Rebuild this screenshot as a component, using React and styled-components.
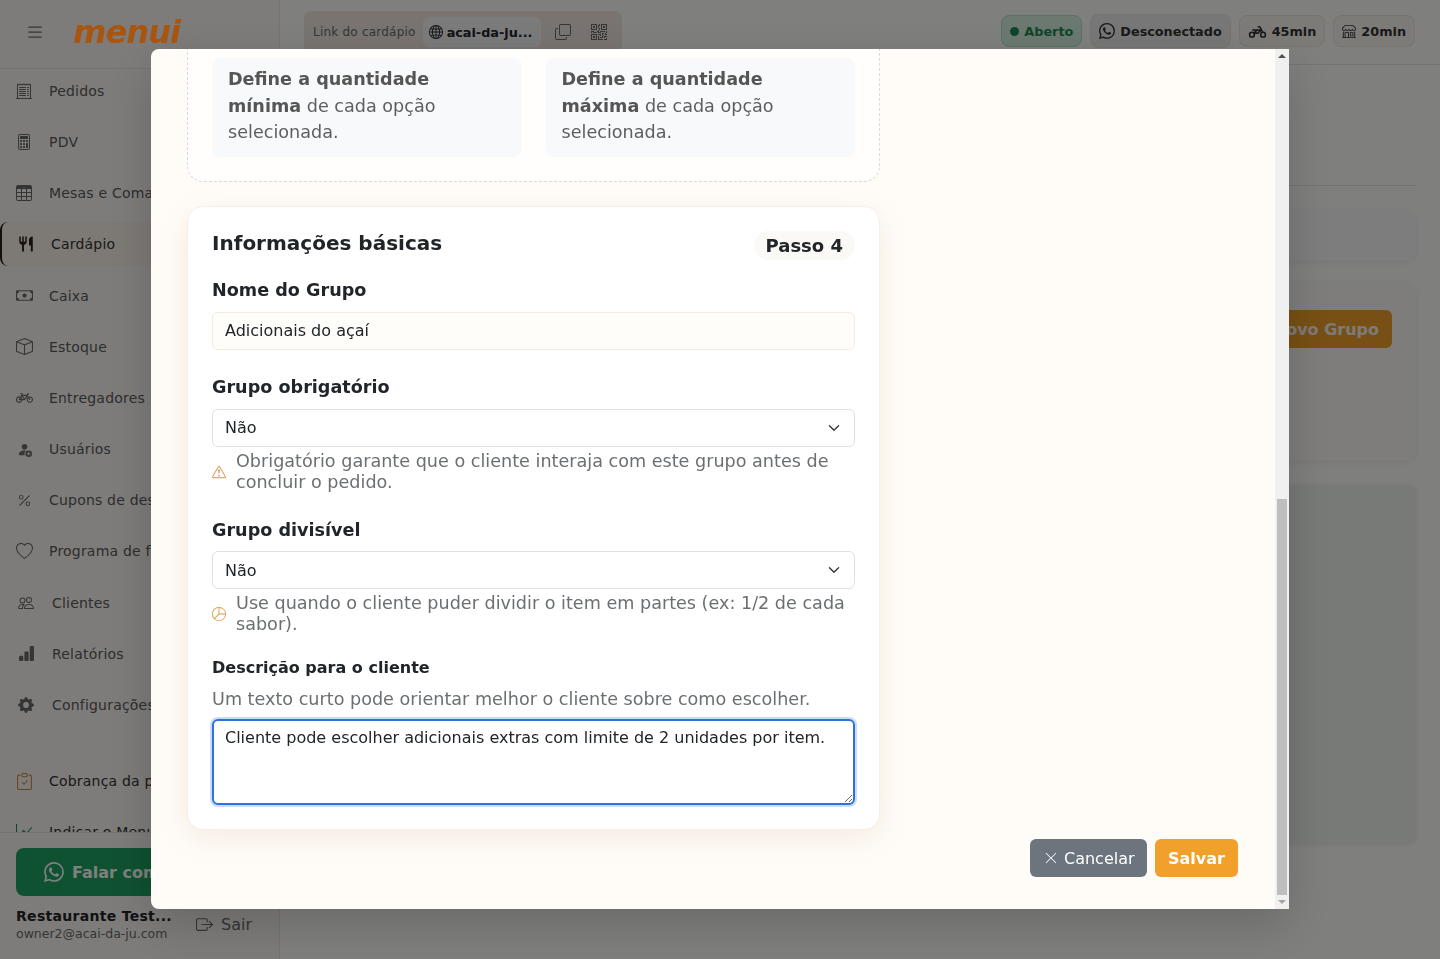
import styled, { createGlobalStyle } from 'styled-components';
import {
  BsBarChartFill,
  BsBicycle,
  BsBox,
  BsBoxArrowRight,
  BsCalculator,
  BsCash,
  BsChevronDown,
  BsCircleFill,
  BsClipboardCheck,
  BsCopy,
  BsExclamationTriangle,
  BsGearFill,
  BsGlobe,
  BsGraphUp,
  BsHeart,
  BsList,
  BsPeople,
  BsPercent,
  BsPersonFillAdd,
  BsPieChart,
  BsQrCode,
  BsReceiptCutoff,
  BsShop,
  BsTable,
  BsWhatsapp,
  BsXLg,
} from 'react-icons/bs';
import { MdRestaurant } from 'react-icons/md';
import { TbMotorbike } from 'react-icons/tb';

const NAV_TOP = [
  { label: 'Pedidos', Icon: BsReceiptCutoff, size: 16 },
  { label: 'PDV', Icon: BsCalculator, size: 16 },
  { label: 'Mesas e Comandas', Icon: BsTable, size: 16 },
  { label: 'Cardápio', Icon: MdRestaurant, active: true },
  { label: 'Caixa', Icon: BsCash, size: 17 },
  { label: 'Estoque', Icon: BsBox, size: 17 },
  { label: 'Entregadores', Icon: BsBicycle, size: 17 },
  { label: 'Usuários', Icon: BsPersonFillAdd, size: 15 },
  { label: 'Cupons de desconto', Icon: BsPercent, size: 15 },
  { label: 'Programa de fidelidade', Icon: BsHeart, size: 17 },
  { label: 'Clientes', Icon: BsPeople, size: 16, nudge: true },
  { label: 'Relatórios', Icon: BsBarChartFill, size: 17, nudge: true },
  { label: 'Configurações', Icon: BsGearFill, size: 16, nudge: true },
];

export default function App() {
  return (
    <>
      <GlobalStyle />
      <Shell>
        <Sidebar>
          <Brand>
            <BsList />
            <Logo>menui</Logo>
          </Brand>
          <Nav>
            {NAV_TOP.map(({ label, Icon, size, active, nudge }) => (
              <NavItem key={label} $active={active} $nudge={nudge} $size={size}>
                <IconSlot>
                  <Icon />
                </IconSlot>
                <span>{label}</span>
              </NavItem>
            ))}
            <NavDivider />
            <NavItem $strong $size={17}>
              <IconSlot>
                <BsClipboardCheck color="#c98a3c" />
              </IconSlot>
              <span>Cobrança da plataforma</span>
            </NavItem>
            <NavItem $strong $size={17}>
              <IconSlot>
                <BsGraphUp color="#1c8a57" />
              </IconSlot>
              <span>Indicar o Menui</span>
            </NavItem>
          </Nav>
          <SideFooter>
            <SupportButton>
              <BsWhatsapp />
              Falar com suporte
            </SupportButton>
            <UserRow>
              <UserInfo>
                <strong>Restaurante Test...</strong>
                <small>owner2@acai-da-ju.com</small>
              </UserInfo>
              <LogoutLink>
                <BsBoxArrowRight />
                Sair
              </LogoutLink>
            </UserRow>
          </SideFooter>
        </Sidebar>

        <Main>
          <TopBar>
            <LinkBox>
              <span>Link do cardápio</span>
              <LinkSlug>
                <BsGlobe />
                acai-da-ju...
              </LinkSlug>
              <LinkActions>
                <LinkAction>
                  <BsCopy />
                </LinkAction>
                <LinkAction>
                  <BsQrCode />
                </LinkAction>
              </LinkActions>
            </LinkBox>
            <Chips>
              <Chip $tone="open" $icon={9}>
                <BsCircleFill />
                Aberto
              </Chip>
              <Chip $tone="plain" $icon={16}>
                <BsWhatsapp />
                Desconectado
              </Chip>
              <Chip $icon={19}>
                <TbMotorbike />
                45min
              </Chip>
              <Chip $icon={14}>
                <BsShop />
                20min
              </Chip>
            </Chips>
          </TopBar>
          <Content>
            <PageHead />
            <SearchCard />
            <GroupsCard>
              <NewGroupButton>Novo Grupo</NewGroupButton>
            </GroupsCard>
            <ListCard />
          </Content>
        </Main>
      </Shell>

      <Backdrop>
        <Modal>
          <ModalBody>
            <Column>
              <DashedCard>
                <HintBox>
                  <b>Define a quantidade mínima</b> de cada opção selecionada.
                </HintBox>
                <HintBox>
                  <b>Define a quantidade máxima</b> de cada opção selecionada.
                </HintBox>
              </DashedCard>

              <InfoCard>
                <CardHead>
                  <h2>Informações básicas</h2>
                  <StepPill>Passo 4</StepPill>
                </CardHead>

                <Field $gap={27}>
                  <FieldLabel>Nome do Grupo</FieldLabel>
                  <TextInput defaultValue="Adicionais do açaí" />
                </Field>

                <Field $gap={27}>
                  <FieldLabel>Grupo obrigatório</FieldLabel>
                  <SelectBox>
                    Não
                    <BsChevronDown />
                  </SelectBox>
                  <FieldHint>
                    <BsExclamationTriangle />
                    <span>
                      Obrigatório garante que o cliente interaja com este grupo
                      antes de concluir o pedido.
                    </span>
                  </FieldHint>
                </Field>

                <Field $gap={23}>
                  <FieldLabel>Grupo divisível</FieldLabel>
                  <SelectBox>
                    Não
                    <BsChevronDown />
                  </SelectBox>
                  <FieldHint>
                    <BsPieChart />
                    <span>
                      Use quando o cliente puder dividir o item em partes (ex:
                      1/2 de cada sabor).
                    </span>
                  </FieldHint>
                </Field>

                <DescLabel>Descrição para o cliente</DescLabel>
                <DescHelp>
                  Um texto curto pode orientar melhor o cliente sobre como
                  escolher.
                </DescHelp>
                <DescArea defaultValue="Cliente pode escolher adicionais extras com limite de 2 unidades por item." />
              </InfoCard>
            </Column>

            <ModalActions>
              <CancelButton>
                <BsXLg />
                Cancelar
              </CancelButton>
              <SaveButton>Salvar</SaveButton>
            </ModalActions>
          </ModalBody>

          <ScrollTrack>
            <ScrollArrow $up />
            <ScrollRail>
              <ScrollThumb />
            </ScrollRail>
            <ScrollArrow />
          </ScrollTrack>
        </Modal>
      </Backdrop>
    </>
  );
}

const FONT = '"DejaVu Sans", Verdana, sans-serif';

const GlobalStyle = createGlobalStyle`
  * {
    box-sizing: border-box;
  }
  html,
  body {
    margin: 0;
    height: 100%;
    overflow: hidden;
    background: #fefefa;
    color: #212529;
    font-family: ${FONT};
  }
`;

/* page behind the dialog */
const Shell = styled.div`
  display: flex;
  height: 959px;
`;

const Sidebar = styled.aside`
  width: 280px;
  flex-shrink: 0;
  display: flex;
  flex-direction: column;
  border-right: 1px solid #ece7e1;
  background: #fcf8f5;
`;

const Brand = styled.div`
  height: 69px;
  flex-shrink: 0;
  display: flex;
  align-items: center;
  gap: 28px;
  padding: 0 0 4px 25px;
  border-bottom: 1px solid #ece7e1;

  > svg {
    width: 20px;
    height: 20px;
    color: #6b6b6b;
  }
`;

/* the logo keeps its saturated colour above the backdrop */
const Logo = styled.span`
  position: relative;
  z-index: 11;
  color: #a85510;
  font: italic 700 32px/1 ${FONT};
  letter-spacing: -0.9px;
`;

const Nav = styled.nav`
  flex: 1;
  min-height: 0;
  overflow: hidden;
  display: flex;
  flex-direction: column;
  gap: 7.17px;
`;

const IconSlot = styled.span`
  width: 18px;
  height: 18px;
  flex-shrink: 0;
  display: flex;
  align-items: center;
  justify-content: center;
`;

const NavItem = styled.div`
  height: 44px;
  flex-shrink: 0;
  display: flex;
  align-items: center;
  gap: ${(p) => (p.$nudge ? '17px' : '16px')};
  padding-left: ${(p) => (p.$nudge ? '17px' : '15px')};
  margin-right: 16px;
  border-left: ${(p) => (p.$active ? '2px solid #2c1c14' : '0')};
  border-radius: ${(p) => (p.$active ? '8px' : '0')};
  background: ${(p) => (p.$active ? '#faf2eb' : 'transparent')};
  color: ${(p) => (p.$active || p.$strong ? '#333' : '#5b5b5b')};
  font-size: 14px;
  letter-spacing: 0.2px;
  white-space: nowrap;

  ${IconSlot} svg {
    width: ${(p) => p.$size || 18}px;
    height: ${(p) => p.$size || 18}px;
    color: ${(p) => (p.$active ? '#2c1c14' : '#6b6b6b')};
  }
`;

const NavDivider = styled.div`
  height: 18px;
  flex-shrink: 0;
`;

const SideFooter = styled.div`
  flex-shrink: 0;
  padding: 15px 16px 0;
  height: 127px;
  border-top: 1px solid #ece7e1;
  background: #fcf8f5;
`;

const SupportButton = styled.div`
  height: 48px;
  display: flex;
  align-items: center;
  justify-content: center;
  gap: 8px;
  border-radius: 8px;
  background: #1da462;
  color: #fff;
  font-size: 16px;
  font-weight: 700;

  > svg {
    width: 20px;
    height: 20px;
  }
`;

const UserRow = styled.div`
  display: flex;
  align-items: center;
  justify-content: space-between;
  margin-top: 12px;
  padding-right: 11px;
`;

const UserInfo = styled.div`
  display: flex;
  flex-direction: column;
  gap: 1px;

  strong {
    font-size: 14px;
    line-height: 17px;
    letter-spacing: 0.3px;
  }
  small {
    color: #6b6b6b;
    font-size: 12.5px;
    line-height: 16px;
  }
`;

const LogoutLink = styled.div`
  display: flex;
  align-items: center;
  gap: 8px;
  padding-bottom: 2px;
  color: #6b6b6b;
  font-size: 16px;

  svg {
    width: 17px;
    height: 17px;
  }
`;

const Main = styled.main`
  flex: 1;
  min-width: 0;
  display: flex;
  flex-direction: column;
`;

const TopBar = styled.header`
  height: 65px;
  flex-shrink: 0;
  display: flex;
  align-items: flex-start;
  justify-content: space-between;
  padding: 11px 25px 0 24px;
  border-bottom: 1px solid #ece7e1;
`;

const LinkBox = styled.div`
  width: 318px;
  height: 42px;
  display: flex;
  align-items: center;
  gap: 7px;
  padding: 0 9px;
  border-radius: 8px;
  background: #f2e8de;
  color: #6b6b6b;
  font-size: 12px;
  letter-spacing: 0.22px;
  white-space: nowrap;
`;

const LinkSlug = styled.div`
  width: 118px;
  height: 30px;
  flex-shrink: 0;
  display: flex;
  align-items: center;
  gap: 4px;
  padding-left: 6px;
  border-radius: 6px;
  background: #f6f6f6;
  color: #212529;
  font-size: 12.8px;
  font-weight: 700;
  letter-spacing: 0;

  svg {
    width: 14px;
    height: 14px;
  }
`;

const LinkActions = styled.div`
  display: flex;
  margin-left: -3px;
`;

const LinkAction = styled.div`
  width: 36px;
  display: flex;
  justify-content: center;
  color: #6b6b6b;

  svg {
    width: 16px;
    height: 16px;
  }
`;

const Chips = styled.div`
  display: flex;
  align-items: center;
  gap: 8px;
  margin-top: 3px;
`;

const Chip = styled.div`
  height: ${(p) => (p.$tone === 'plain' ? '34px' : '32px')};
  display: flex;
  align-items: center;
  gap: 5px;
  padding: 0 8px;
  border: 1px solid ${(p) => (p.$tone === 'open' ? '#b7e5cb' : '#f0e7dd')};
  border-radius: 8px;
  background: ${(p) =>
    p.$tone === 'open' ? '#d6f3e2' : p.$tone === 'plain' ? '#eeeeee' : '#fbf6f0'};
  color: ${(p) => (p.$tone === 'open' ? '#1d8a54' : '#333')};
  font-size: 12.8px;
  font-weight: 700;

  svg {
    width: ${(p) => p.$icon}px;
    height: ${(p) => p.$icon}px;
  }
`;

const Content = styled.div`
  flex: 1;
  padding: 0 24px;
  display: flex;
  flex-direction: column;
`;

const PageHead = styled.div`
  height: 121px;
  flex-shrink: 0;
  border-bottom: 1px solid #e8e6e2;
`;

const SearchCard = styled.div`
  height: 50px;
  margin-top: 25px;
  flex-shrink: 0;
  border-radius: 12px;
  background: #fcfbfa;
  box-shadow: 0 1px 6px rgba(0, 0, 0, 0.07);
`;

const GroupsCard = styled.div`
  height: 177px;
  margin-top: 23px;
  flex-shrink: 0;
  display: flex;
  justify-content: flex-end;
  align-items: flex-start;
  padding: 26px 24px 0 0;
  border-radius: 12px;
  background: #fdfbf9;
  box-shadow: 0 1px 6px rgba(0, 0, 0, 0.07);
`;

const NewGroupButton = styled.div`
  height: 38px;
  display: flex;
  align-items: center;
  padding: 0 13px;
  border-radius: 6px;
  background: #f0a02b;
  color: #f9f6f0;
  font-size: 16px;
  font-weight: 700;
`;

const ListCard = styled.div`
  height: 358px;
  margin-top: 25px;
  flex-shrink: 0;
  border-radius: 8px;
  background: #f0f5f1;
  box-shadow: 0 0 5px rgba(0, 0, 0, 0.09);
`;

/* dialog */
const Backdrop = styled.div`
  position: fixed;
  inset: 0;
  z-index: 10;
  display: flex;
  align-items: flex-start;
  justify-content: center;
  padding-top: 49px;
  background: rgba(0, 0, 0, 0.5);
`;

const Modal = styled.div`
  width: 1138px;
  height: 860px;
  display: flex;
  overflow: hidden;
  border-radius: 8px 0 0 8px;
  background: #fffcf8;
  box-shadow: 0 16px 48px rgba(0, 0, 0, 0.175);
`;

const ModalBody = styled.div`
  flex: 1;
  min-width: 0;
  overflow: hidden;
  padding: 0 37px 0 36px;
`;

const Column = styled.div`
  width: 693px;
  margin-top: -16px;
  display: flex;
  flex-direction: column;
  gap: 24px;
`;

const DashedCard = styled.section`
  display: grid;
  grid-template-columns: 1fr 1fr;
  gap: 24px;
  padding: 24px;
  border: 1px dashed #d9d9de;
  border-radius: 16px;
  background: #fffefd;
`;

const HintBox = styled.div`
  padding: 8px 16px 11.5px;
  border-radius: 8px;
  background: #f8f9fa;
  color: #5c5f62;
  font-size: 17.6px;
  line-height: 26.5px;

  b {
    color: #555;
  }
`;

const InfoCard = styled.section`
  height: 624px;
  padding: 24px;
  border: 1px solid #f7efe6;
  border-radius: 16px;
  background: #fff;
  box-shadow: 0 8px 32px rgba(170, 110, 60, 0.12);
`;

const CardHead = styled.div`
  display: flex;
  align-items: flex-start;
  justify-content: space-between;
  height: 49px;

  h2 {
    margin: 0;
    font-size: 20px;
    line-height: 24px;
    font-weight: 700;
  }
`;

const StepPill = styled.div`
  height: 29px;
  display: flex;
  align-items: center;
  padding: 0 12px;
  border-radius: 15px;
  background: #fbf9f6;
  font-size: 18px;
  font-weight: 700;
`;

/* the gap collapses with the bottom margin of a FieldHint inside */
const Field = styled.div`
  margin-bottom: ${(p) => p.$gap}px;
`;

const FieldLabel = styled.div`
  margin-bottom: 10.75px;
  font-size: 17.6px;
  line-height: 21px;
  font-weight: 700;
`;

const TextInput = styled.input`
  display: block;
  width: 100%;
  height: 38px;
  padding: 0 12px;
  border: 1px solid #f5eadc;
  border-radius: 6px;
  outline: 0;
  background: #fffdfa;
  color: #212529;
  font: 16px ${FONT};
`;

const SelectBox = styled.div`
  height: 38px;
  display: flex;
  align-items: center;
  justify-content: space-between;
  padding: 0 14px 0 12px;
  border: 1px solid #dee2e6;
  border-radius: 6px;
  background: #fff;
  font-size: 16px;

  svg {
    width: 12px;
    height: 12px;
    stroke-width: 1px;
  }
`;

const FieldHint = styled.div`
  display: flex;
  align-items: center;
  gap: 10px;
  margin-top: 4px;
  margin-bottom: 23px;
  color: #6c6f72;
  font-size: 17.6px;
  line-height: 21px;

  svg {
    width: 14px;
    height: 14px;
    flex-shrink: 0;
    color: #d9973f;
  }
`;

const DescLabel = styled.div`
  font-size: 16px;
  line-height: 19px;
  font-weight: 700;
`;

const DescHelp = styled.div`
  margin-top: 12px;
  color: #6c6f72;
  font-size: 17.6px;
  line-height: 21px;
`;

const DescArea = styled.textarea`
  display: block;
  width: 100%;
  height: 86px;
  margin-top: 8.5px;
  padding: 5px 11px;
  border: 2px solid #2f72dc;
  border-radius: 6px;
  outline: 0;
  box-shadow: 0 0 0 2px rgba(80, 140, 240, 0.3);
  color: #212529;
  font: 16px/24px ${FONT};
`;

const ModalActions = styled.div`
  display: flex;
  justify-content: flex-end;
  gap: 8px;
  margin-top: 9px;
`;

const ActionButton = styled.button`
  height: 38px;
  display: flex;
  align-items: center;
  border: 0;
  border-radius: 6px;
  color: #fff;
  font: 16px ${FONT};
`;

const CancelButton = styled(ActionButton)`
  width: 117px;
  gap: 6px;
  padding: 0 0 0 14px;
  background: #6c757d;

  svg {
    width: 14px;
    height: 14px;
  }
`;

const SaveButton = styled(ActionButton)`
  width: 83px;
  justify-content: center;
  background: #f0a02b;
  font-weight: 700;
`;

const ScrollTrack = styled.div`
  width: 14px;
  flex-shrink: 0;
  display: flex;
  flex-direction: column;
  background: #f1f0f1;
`;

const ScrollArrow = styled.div`
  height: 14px;
  flex-shrink: 0;
  display: flex;
  align-items: center;
  justify-content: center;

  &::before {
    content: '';
    border-left: 4px solid transparent;
    border-right: 4px solid transparent;
    border-bottom: ${(p) => (p.$up ? '4px solid #505050' : '0')};
    border-top: ${(p) => (p.$up ? '0' : '4px solid #a3a3a3')};
  }
`;

const ScrollRail = styled.div`
  flex: 1;
  display: flex;
  flex-direction: column;
  justify-content: flex-end;
`;

const ScrollThumb = styled.div`
  height: 396px;
  margin: 0 2px;
  background: #bebebe;
`;
